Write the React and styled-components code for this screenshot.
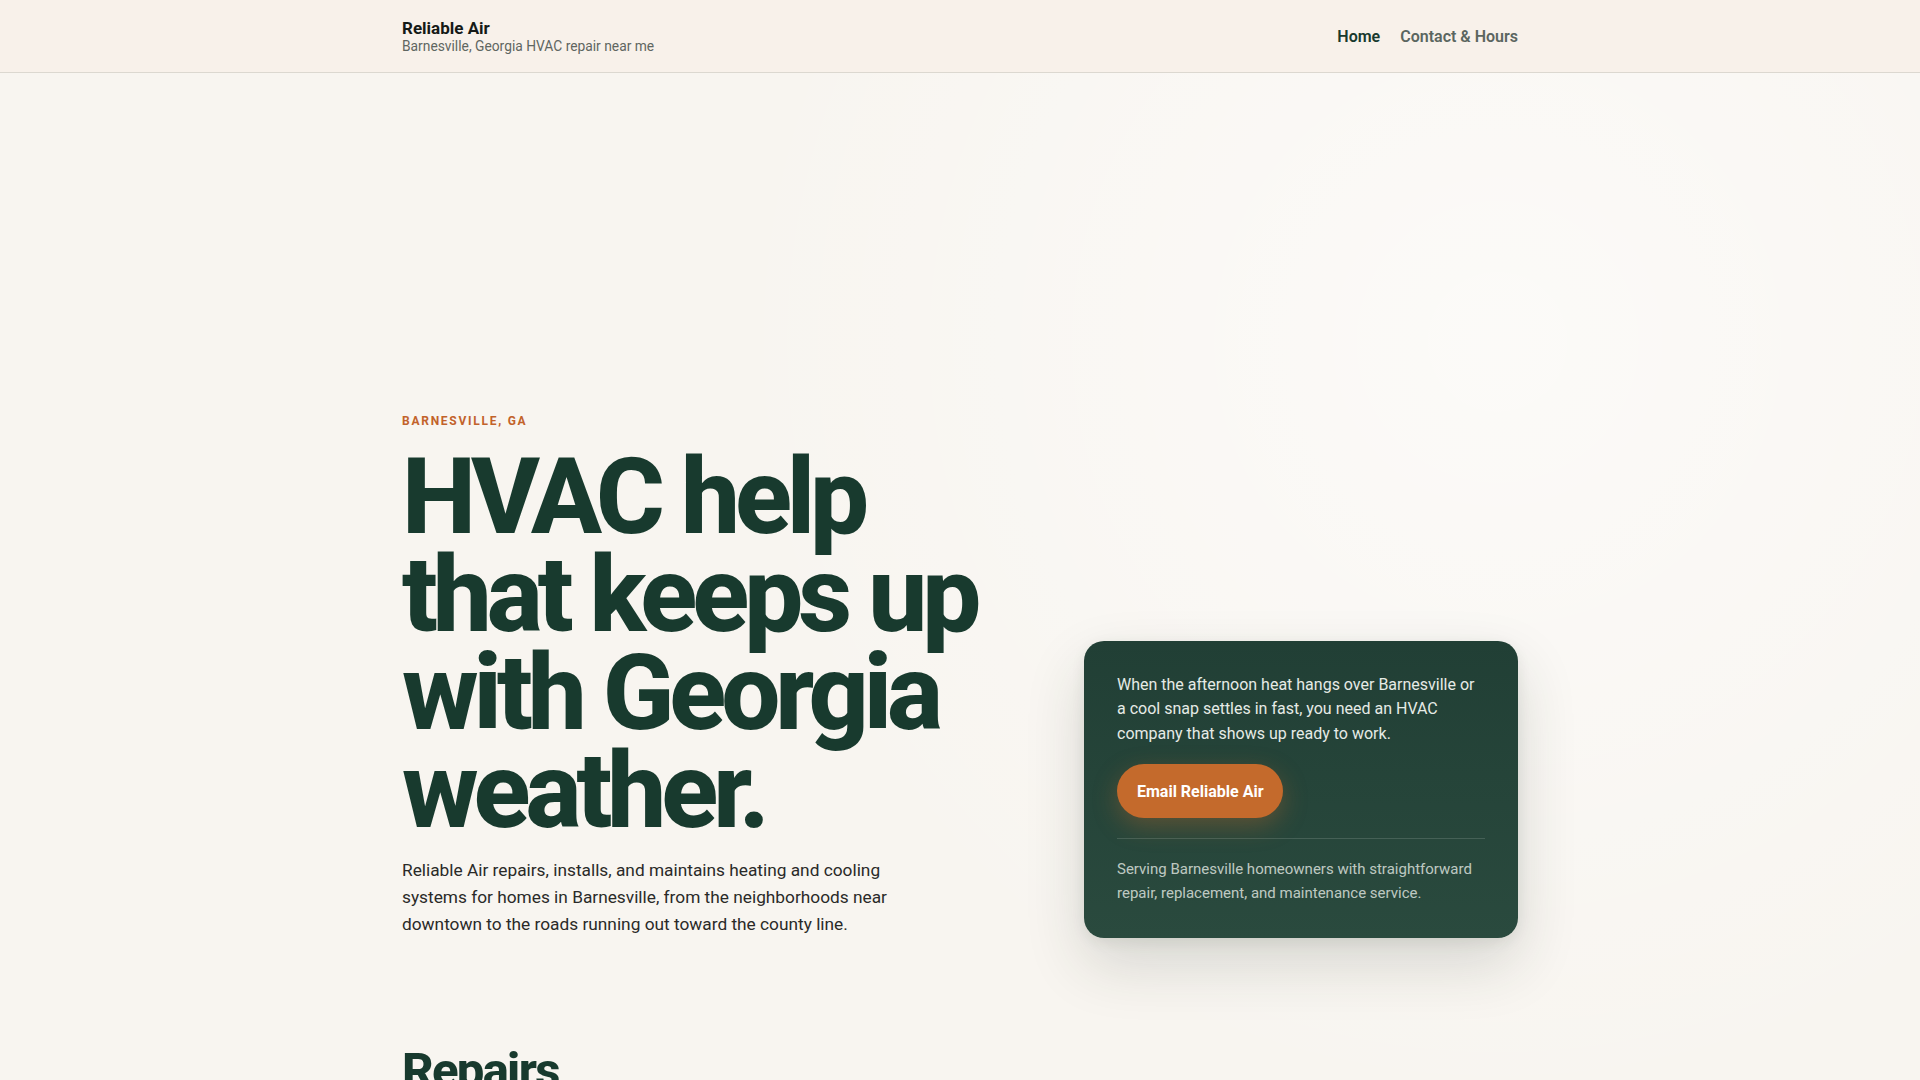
import React from "react";
import styled, { createGlobalStyle } from "styled-components";

// Global
const GlobalStyle = createGlobalStyle`
	* { box-sizing: border-box; }
	body {
		margin: 0;
		font-family: Roboto, "Liberation Sans", Arial, sans-serif;
		color: #2a2a28;
		background:
			radial-gradient(circle at 78% 28%, rgba(255,255,255,0.55), rgba(255,255,255,0) 45%),
			#f8f5f0;
		-webkit-font-smoothing: antialiased;
	}
`;

// Header
const Header = styled.header`
	background: rgba(248, 240, 233, 0.95);
	border-bottom: 1px solid #dcd8d0;
`;

const Wrap = styled.div`
	max-width: 1116px;
	margin: 0 auto;
`;

const HeaderInner = styled(Wrap)`
	height: 72px;
	display: flex;
	align-items: center;
	justify-content: space-between;
`;

const Brand = styled.div`
	display: flex;
	flex-direction: column;
`;

const BrandName = styled.span`
	font-size: 17px;
	font-weight: 700;
	line-height: 20px;
	color: #151a17;
`;

const BrandTag = styled.span`
	font-size: 13.8px;
	line-height: 17px;
	color: #5f6661;
`;

const Nav = styled.nav`
	display: flex;
	gap: 20px;
`;

const NavLink = styled.a`
	font-size: 16px;
	font-weight: 600;
	text-decoration: none;
	color: ${(p) => (p.$active ? "#183a2e" : "#5b6660")};
`;

// Hero
const Hero = styled(Wrap)`
	padding: 340px 0 56px;
	display: grid;
	grid-template-columns: 1fr 434px;
	align-items: end;
	gap: 40px;
`;

const Eyebrow = styled.div`
	font-size: 12px;
	font-weight: 700;
	letter-spacing: 0.145em;
	text-transform: uppercase;
	color: #c2622a;
	line-height: 16px;
	margin-bottom: 20px;
`;

const Title = styled.h1`
	margin: 0;
	font-size: 105px;
	line-height: 98px;
	font-weight: 800;
	letter-spacing: -0.048em;
	color: #183a2e;
`;

const Lead = styled.p`
	margin: 16px 0 0;
	max-width: 520px;
	font-size: 17.3px;
	line-height: 27px;
	color: #2a2a28;
`;

const Card = styled.aside`
	background: linear-gradient(180deg, #213f35 0%, #2a4a3e 100%);
	border-radius: 20px;
	padding: 32px 33px 33px;
	box-shadow: 0 26px 60px rgba(40, 50, 40, 0.16), 0 4px 14px rgba(40, 50, 40, 0.08);
	color: #e3e8e3;
`;

const CardText = styled.p`
	margin: 0;
	font-size: 16px;
	line-height: 24.5px;
	color: #e6ebe6;
`;

const Button = styled.a`
	display: inline-flex;
	align-items: center;
	height: 54px;
	padding: 0 20px;
	margin-top: 18px;
	border-radius: 999px;
	background: #c46a2c;
	color: #fff;
	font-size: 16px;
	font-weight: 700;
	text-decoration: none;
	box-shadow: 0 8px 24px rgba(196, 106, 44, 0.35);
`;

const CardFoot = styled.p`
	margin: 20px 0 0;
	padding-top: 18px;
	border-top: 1px solid rgba(255, 255, 255, 0.14);
	font-size: 15px;
	line-height: 24px;
	color: rgba(230, 236, 230, 0.8);
`;

// Services
const Section = styled(Wrap)`
	padding: 50px 0 80px;
`;

const SectionTitle = styled.h2`
	margin: 0;
	font-size: 49px;
	line-height: 1.1;
	font-weight: 800;
	letter-spacing: -0.035em;
	color: #183a2e;
`;

const SectionText = styled.p`
	margin: 16px 0 0;
	max-width: 620px;
	font-size: 17px;
	line-height: 27px;
`;

const App = () => {
	return (
		<>
			<GlobalStyle />
			<Header>
				<HeaderInner>
					<Brand>
						<BrandName>Reliable Air</BrandName>
						<BrandTag>Barnesville, Georgia HVAC repair near me</BrandTag>
					</Brand>
					<Nav>
						<NavLink href="#" $active>Home</NavLink>
						<NavLink href="#">Contact &amp; Hours</NavLink>
					</Nav>
				</HeaderInner>
			</Header>
			<Hero>
				<div>
					<Eyebrow>Barnesville, GA</Eyebrow>
					<Title>
						HVAC help<br />that keeps up<br />with Georgia<br />weather.
					</Title>
					<Lead>
						Reliable Air repairs, installs, and maintains heating and cooling systems for homes in
						Barnesville, from the neighborhoods near downtown to the roads running out toward the
						county line.
					</Lead>
				</div>
				<Card>
					<CardText>
						When the afternoon heat hangs over Barnesville or a cool snap settles in fast, you need an
						HVAC company that shows up ready to work.
					</CardText>
					<Button href="#">Email Reliable Air</Button>
					<CardFoot>
						Serving Barnesville homeowners with straightforward repair, replacement, and maintenance
						service.
					</CardFoot>
				</Card>
			</Hero>
			<Section>
				<SectionTitle>Repairs</SectionTitle>
				<SectionText>
					Fast diagnosis and honest fixes for air conditioners, heat pumps, and furnaces.
				</SectionText>
			</Section>
		</>
	);
};

export default App;
